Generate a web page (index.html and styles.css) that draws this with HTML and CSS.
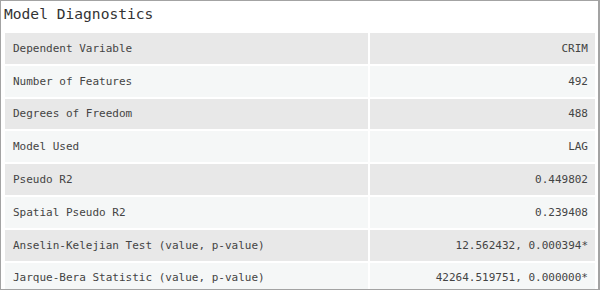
FILE: index.html
```html
<!DOCTYPE html>
<html>
<head>
<meta charset="utf-8">
<link rel="stylesheet" href="styles.css">
</head>
<body>
<div class="panel">
  <h1 class="title">Model Diagnostics</h1>
  <table class="diag">
    <tr class="odd"><td class="k">Dependent Variable</td><td class="v">CRIM</td></tr>
    <tr class="even"><td class="k">Number of Features</td><td class="v">492</td></tr>
    <tr class="odd"><td class="k">Degrees of Freedom</td><td class="v">488</td></tr>
    <tr class="even"><td class="k">Model Used</td><td class="v">LAG</td></tr>
    <tr class="odd"><td class="k">Pseudo R2</td><td class="v">0.449802</td></tr>
    <tr class="even"><td class="k">Spatial Pseudo R2</td><td class="v">0.239408</td></tr>
    <tr class="odd"><td class="k">Anselin-Kelejian Test (value, p-value)</td><td class="v">12.562432, 0.000394*</td></tr>
    <tr class="even"><td class="k">Jarque-Bera Statistic (value, p-value)</td><td class="v">42264.519751, 0.000000*</td></tr>
  </table>
</div>
</body>
</html>
```
FILE: styles.css
```css
html, body {
  margin: 0;
  padding: 0;
  background: #fff;
}
.panel {
  box-sizing: border-box;
  width: 600px;
  height: 290px;
  border: 1px solid #a3a3a3;
  border-right-width: 2px;
  padding: 0 1px 0 2px;
  overflow: hidden;
  font-family: "DejaVu Sans Mono", "Liberation Mono", monospace;
  color: #444;
}
.title {
  margin: 0;
  padding: 2px 0 0 1px;
  height: 30px;
  box-sizing: border-box;
  font-size: 14.6px;
  font-weight: normal;
  color: #333;
  line-height: 22px;
}
.diag {
  width: 594px;
  border-collapse: separate;
  border-spacing: 2px;
  margin-top: 0;
  font-size: 11px;
}
.diag td {
  height: 30.8px;
  padding: 0 7px 0 8px;
  box-sizing: border-box;
  white-space: nowrap;
}
.diag .k {
  width: 363px;
}
.diag .v {
  text-align: right;
}
.odd td {
  background: #e8e8e8;
}
.even td {
  background: #f5f7f7;
}
```
